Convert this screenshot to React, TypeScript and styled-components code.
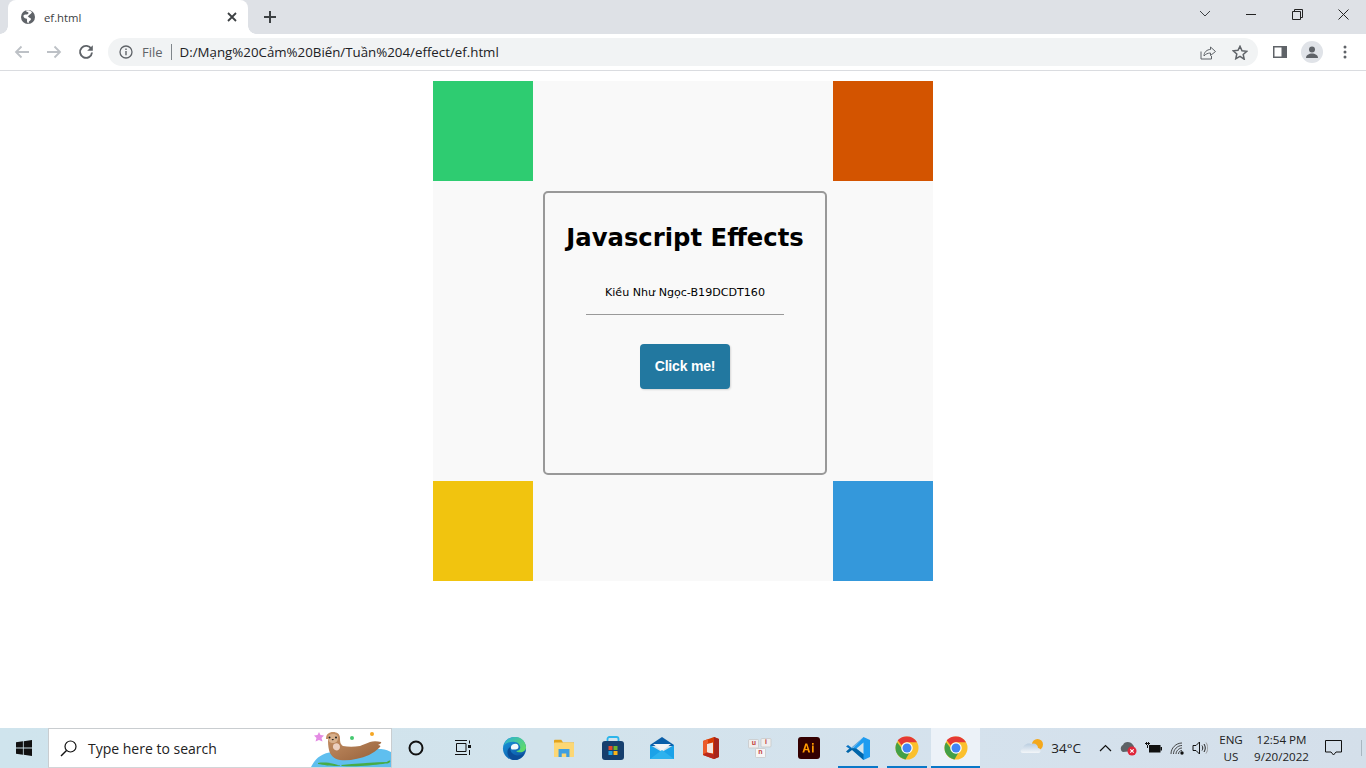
import React from "react";
import styled, { createGlobalStyle } from "styled-components";

const Global = createGlobalStyle`
  html, body { margin: 0; padding: 0; background: #fff; overflow: hidden; }
  * { box-sizing: border-box; }
`;

const Screen = styled.div`
  width: 1366px; height: 768px; display: flex; flex-direction: column; background: #fff;
  font-family: "Open Sans", "Noto Sans", sans-serif;
`;

/* ---------- browser chrome ---------- */
const TabStrip = styled.div`
  height: 34px; background: #dee1e6; display: flex; align-items: stretch; padding-left: 8px; flex: none;
`;
const Tab = styled.div`
  position: relative; width: 240px; background: #fff; border-radius: 8px 8px 0 0;
  display: flex; align-items: center; padding: 0 8px 0 12px; color: #3c4043;
  &::before, &::after { content: ""; position: absolute; bottom: 0; width: 8px; height: 8px; }
  &::before { left: -8px; background: radial-gradient(circle at 0 0, #dee1e6 7.5px, #fff 8px); }
  &::after { right: -8px; background: radial-gradient(circle at 100% 0, #dee1e6 7.5px, #fff 8px); }
`;
const TabTitle = styled.span`
  font-size: 11.3px; margin-left: 8px; flex: 1; color: #3c4043;
`;
const NewTab = styled.div`
  width: 28px; height: 28px; margin-left: 8px; align-self: center; display: flex; align-items: center; justify-content: center;
`;
const StripSpacer = styled.div`flex: 1;`;
const WindowButton = styled.div`
  width: 46px; display: flex; align-items: center; justify-content: center; padding-bottom: 6px;
`;
const Toolbar = styled.div`
  height: 37px; flex: none; background: #fff; border-bottom: 1px solid #dadce0; display: flex; align-items: center;
  padding: 0 0 0 6px;
`;
const NavButton = styled.div`
  width: 32px; height: 28px; display: flex; align-items: center; justify-content: center; flex: none;
`;
const Omnibox = styled.div`
  width: 1150px; height: 28px; margin-left: 6px; border-radius: 14px; background: #f1f3f4; display: flex; align-items: center;
  padding: 0 2px 0 11px; flex: none;
`;
const SiteLabel = styled.span`
  font-size: 13px; color: #5f6368; margin-left: 9px;
`;
const Divider = styled.span`
  width: 1px; height: 16px; background: #80868b; margin: 0 8px 0 8px;
`;
const Url = styled.span`
  font-size: 13.3px; color: #202124; flex: 1; white-space: nowrap;
`;
const OmniAction = styled.div`
  width: 32px; display: flex; align-items: center; justify-content: center;
`;
const ToolRight = styled.div`
  display: flex; align-items: center; margin-left: 6px;
`;
const Avatar = styled.div`
  width: 22px; height: 22px; border-radius: 50%; background: #e0e3e8; margin: 0 20px 0 5px;
  display: flex; align-items: center; justify-content: center; overflow: hidden;
`;

/* ---------- page ---------- */
const Page = styled.main`
  flex: 1; display: flex; justify-content: center; padding-top: 10px; background: #fff;
`;
const Stage = styled.div`
  width: 500px; height: 500px; background: #f9f9f9; display: grid;
  grid-template-columns: 100px 300px 100px; grid-template-rows: 100px 300px 100px;
`;
const Corner = styled.div<{ $color: string }>`
  background: ${(p) => p.$color};
`;
const Blank = styled.div``;
const Card = styled.section`
  width: 284px; height: 284px; margin: 10px; border: 2px solid #999; border-radius: 5px;
  display: flex; flex-direction: column; align-items: center; padding-top: 28px;
`;
const Heading = styled.h1`
  margin: 0; font: bold 24.3px/34px "DejaVu Sans", Verdana, sans-serif; color: #000; white-space: nowrap;
`;
const Author = styled.p`
  margin: 31px 0 0; font: 11.1px/14px "DejaVu Sans", Verdana, sans-serif; color: #000; white-space: nowrap;
`;
const Rule = styled.hr`
  width: 198px; height: 1px; border: 0; background: #999; margin: 14px 0 0;
`;
const ActionButton = styled.button`
  width: 90px; height: 45px; margin-top: 29px; background: #2278a0; color: #fff; border: 0; border-radius: 4px;
  font: bold 14px "Liberation Sans", Arial, sans-serif; letter-spacing: -0.2px; box-shadow: 1px 1px 2px rgba(0,0,0,0.14); padding: 0 0 2px;
`;

/* ---------- taskbar ---------- */
const Taskbar = styled.footer`
  height: 40px; flex: none; display: flex; align-items: stretch;
  background: linear-gradient(90deg, #cfe4ed 0%, #d2e3ec 40%, #d5e2ed 70%, #d4dfea 100%);
`;
const StartButton = styled.div`
  width: 48px; display: flex; align-items: center; justify-content: center; flex: none;
`;
const SearchBox = styled.div`
  position: relative; width: 344px; flex: none; background: #fff; border: 1px solid #c9cdd0; border-bottom-color: #d2d5d8;
  display: flex; align-items: center; padding-left: 11px; overflow: hidden;
`;
const SearchText = styled.span`
  font-size: 14px; color: #222; margin-left: 11px;
`;
const Otter = styled.svg`
  position: absolute; right: 0; top: 0;
`;
const TaskSlot = styled.div<{ $w?: number; $pressed?: boolean; $running?: boolean }>`
  position: relative; width: ${(p) => p.$w ?? 49}px; flex: none; display: flex; align-items: center; justify-content: center;
  background: ${(p) => (p.$pressed ? "#ecf2f8" : "transparent")};
  ${(p) => p.$running && `&::after { content: ""; position: absolute; left: ${p.$pressed ? 0 : 5}px; right: ${p.$pressed ? 0 : 4}px; bottom: 0; height: 2px; background: #0a78c8; }`}
`;
const TrayArea = styled.div`
  flex: 1; display: flex; align-items: center; justify-content: flex-end; color: #1a1a1a;
`;
const Temp = styled.span`
  font-size: 13.5px; margin: 0 12px 0 6px; color: #222;
`;
const TrayIcon = styled.div<{ $w: number }>`
  width: ${(p) => p.$w}px; display: flex; align-items: center; justify-content: center; flex: none;
`;
const TrayText = styled.div<{ $w: number }>`
  width: ${(p) => p.$w}px; font-size: 11.6px; line-height: 17px; text-align: center; color: #222; flex: none; white-space: nowrap;
`;
const Notify = styled.div`
  width: 55px; flex: none; display: flex; align-items: center; justify-content: center; padding-right: 10px; position: relative;
  &::after { content: ""; position: absolute; right: 4px; top: 0; bottom: 0; width: 1px; background: #a9b6c0; }
`;
const KeyLetter = styled.text`
  font: bold 7px "Liberation Sans", Arial, sans-serif; fill: #c23b3b; text-anchor: middle;
`;

/* ---------- icons ---------- */
const Chrome = () => (
  <svg width="24" height="24" viewBox="0 0 48 48">
    <circle cx="24" cy="24" r="23" fill="#fbc02d" />
    <path d="M24 1a23 23 0 0 1 19.9 11.5H24a11.5 11.5 0 0 0-10.4 6.6L5.3 8.6A23 23 0 0 1 24 1z" fill="#e53935" />
    <path d="M4.1 12.5A23 23 0 0 0 21 46.8l9.5-16.4a11.5 11.5 0 0 1-16.5-5.6L4.1 12.5z" fill="#43a047" />
    <circle cx="24" cy="24" r="11.5" fill="#fff" />
    <circle cx="24" cy="24" r="9" fill="#4285f4" />
  </svg>
);

const Edge = () => (
  <svg width="25" height="25" viewBox="0 0 26 26">
    <defs>
      <linearGradient id="edgeA" x1="0" y1="0" x2="1" y2="0.7">
        <stop offset="0" stopColor="#2aaed8" />
        <stop offset="1" stopColor="#5fdc68" />
      </linearGradient>
      <linearGradient id="edgeB" x1="0" y1="0" x2="0.7" y2="1">
        <stop offset="0" stopColor="#1a9be0" />
        <stop offset="1" stopColor="#0c55a4" />
      </linearGradient>
    </defs>
    <circle cx="13" cy="13" r="12" fill="url(#edgeB)" />
    <path d="M9 12C9.500 9 12 8 14 8c2.500 0 3.500 2 3 4-.5 1.500-1.500 2-3 2h-4z" fill="#f2f8fb" />
    <path d="M2 10C4 3 9 1 14 1c6 0 11 5 11 11 0 3-3 5-6 5-2 0-4-.5-4-1.500 2.500 0 4-1.500 4-3.500 0-3-3-6-7-6-4 0-8 1-10 4z" fill="url(#edgeA)" />
    <path d="M9.500 11c-2 3 0 8 5 9 3 .5 6 0 8.500-2-1.500 4-5 7-10 7-1 0-2-.1-2.500-.3C6 22 4.500 17 6.500 13.500 7.200 12.300 8.300 11.500 9.500 11z" fill="#0a4c98" />
  </svg>
);

const Explorer = () => (
  <svg width="22" height="20" viewBox="0 0 24 22">
    <path d="M1 3a1 1 0 0 1 1-1h7l2 3h12v2H1z" fill="#e2a31c" />
    <rect x="1" y="5" width="22" height="16" rx="1" fill="#fcd774" />
    <path d="M6 21v-9h12v9h-3.500v-4h-5v4z" fill="#3f9fe0" />
  </svg>
);

const Store = () => (
  <svg width="24" height="25" viewBox="0 0 24 25">
    <path d="M6.500 6V3a2 2 0 0 1 2-2h7a2 2 0 0 1 2 2v3" fill="none" stroke="#2bb5ea" strokeWidth="1.800" />
    <rect x="1" y="5" width="22" height="19" rx="3" fill="#163f6e" />
    <rect x="7.500" y="10" width="4" height="4" fill="#e5482a" />
    <rect x="12.500" y="10" width="4" height="4" fill="#6fb52b" />
    <rect x="7.500" y="15" width="4" height="4" fill="#1ea3e3" />
    <rect x="12.500" y="15" width="4" height="4" fill="#fbb417" />
  </svg>
);

const Mail = () => (
  <svg width="24" height="24" viewBox="0 0 24 24">
    <path d="M0 9l12-8 12 8v1H0z" fill="#0a5ea8" />
    <path d="M3 8h18l-9 7z" fill="#f3f4f6" />
    <path d="M0 9l12 7 12-7v14H0z" fill="#1ba2e8" />
    <path d="M0 23l12-9 12 9z" fill="#2db2ee" />
  </svg>
);

const Office = () => (
  <svg width="18" height="24" viewBox="0 0 18 24">
    <path d="M1 5l11-4 5 2v18l-5 2-11-4z" fill="#d83b01" />
    <path d="M12 1l5 2v18l-5 2z" fill="#a7251c" />
    <path d="M1 5l5-2v4l-1 1v8.500l-4 1.500z" fill="#eb5a2a" />
    <path d="M5 8l6-1.500v11L5 16.500z" fill="#f3e6e0" />
    <path d="M12 23L1 19l4-2.500 7 2z" fill="#b8281e" />
  </svg>
);

const Unikey = () => (
  <svg width="24" height="22" viewBox="0 0 24 22">
    <g stroke="#c4c4c4" strokeWidth="0.7">
      <rect x="0.500" y="2.500" width="10" height="8.500" rx="1" fill="#efefef" />
      <rect x="13" y="1.500" width="10" height="8.500" rx="1" fill="#efefef" />
      <rect x="7.500" y="11.500" width="10" height="9" rx="1" fill="#f6f6f6" />
    </g>
    <KeyLetter x="6" y="8">u</KeyLetter>
    <KeyLetter x="18" y="7">i</KeyLetter>
    <KeyLetter x="12.500" y="17">n</KeyLetter>
  </svg>
);

const AiLogo = () => (
  <svg width="22" height="22" viewBox="0 0 22 22">
    <rect width="22" height="22" rx="3" fill="#300" />
    <path d="M7.300 6.500h1.900l3 9h-1.900l-.7-2.200H6.900l-.7 2.200H4.400zm1 1.800L7.400 11.900h2z" fill="#ff9a00" />
    <path d="M14 8.600h1.700v6.900H14zM14 6h1.700v1.700H14z" fill="#ff9a00" />
  </svg>
);

const VSCode = () => (
  <svg width="26" height="25" viewBox="0 0 26 25">
    <path d="M18.500 1L25 4v17l-6.500 3L7 13z" fill="#1f9cf0" />
    <path d="M18.500 1L7 12l-4-3-2 1.500L5 13z" fill="#0b74c4" />
    <path d="M1 15.500L3 17l4-3 11.500 10V18l-7-5.500L5 12z" fill="#0065a9" />
    <path d="M18.500 6.500L11.500 12.500l7 5.500z" fill="#d2e3ec" />
  </svg>
);

const Weather = () => (
  <svg width="26" height="20" viewBox="0 0 26 20">
    <defs>
      <linearGradient id="cloud" x1="0" y1="0" x2="0" y2="1">
        <stop offset="0" stopColor="#b9cde0" />
        <stop offset="1" stopColor="#f3f6f9" />
      </linearGradient>
    </defs>
    <circle cx="18.500" cy="6.500" r="5.500" fill="#f4a81c" />
    <path d="M4 15c-3 0-3-3.500-.5-4C4.500 7 8 4.500 12 6c3-1.500 7 0 7 4 3 0 3.500 5 .5 5z" fill="url(#cloud)" />
  </svg>
);

const Otters = () => (
  <Otter width="82" height="38" viewBox="0 0 82 38">
    <defs>
      <linearGradient id="otterBody" x1="0" y1="0" x2="1" y2="1">
        <stop offset="0" stopColor="#c89468" />
        <stop offset="1" stopColor="#96603a" />
      </linearGradient>
    </defs>
    <path d="M2 38C6 30 12 24 24 23c14-2 36-4 48-3 5 .5 8 2 10 3v15z" fill="#5fbfef" />
    <path d="M9 34c6-1 14 0 20 2 4 0 2 1-1 1-6 0-14-1-19-2zM32 36c14-1 30-3 46-3 2-2 4-2 3 0-1 2-4 1-7 2-10 1-24 3-41 2z" fill="#47ab46" />
    <path d="M10 3l1.500 3 3.500 .5-2.500 2.500 1 3.500L10 11l-3.500 1.500 1-3.500L5 6.500 8.500 6z" fill="#e48be4" />
    <circle cx="43" cy="9" r="2" fill="#45c870" />
    <circle cx="63" cy="5" r="2" fill="#f5a623" />
    <path d="M17 10C17 5 20 3 24 3s7 2 7 6c0 3 0 6 3 8 5 1 11 1 17 0 3-1 7-3 10-4 3-1 7-1 11 0 1 1-1 2-3 3 2 0 3 1 2 2-3 3-7 6-11 8-9 4-20 6-29 5-6-1-10-5-11-10-1-4-1-8-1-11z" fill="url(#otterBody)" />
    <path d="M19 9c0-3 2-4 5-4s5 1 5 4c0 3-2 5-5 5s-5-2-5-5z" fill="#d8b08c" />
    <circle cx="20.500" cy="8.500" r="1" fill="#222" />
    <circle cx="27" cy="8.500" r="1" fill="#222" />
    <path d="M22.500 10h2.500l-1.200 1.500z" fill="#222" />
    <path d="M25 15c3-2 6 0 6 3s-3 4-5 3-3-4-1-6z" fill="#ecd0c0" />
  </Otter>
);

export default function App() {
  return (
    <Screen>
      <Global />
      <TabStrip>
        <Tab>
          <svg width="16" height="16" viewBox="0 0 16 16">
            <circle cx="8" cy="8" r="7" fill="#5f6368" />
            <path d="M5.500 1.800C6.500 3 8.500 3 8.500 4S7 5.500 6 5.500 4 5.500 3.500 6.500 4.500 9.500 6 9.500 7 11 7 12 7.500 13.500 8 14.500c1 0 .5-1.500 1-2s2-1.500 2-2.500-1.500-1-2-1.500S7.500 7 7.500 7.500 10 5 10.500 5 11.500 3.500 12 3.200C9.500.5 6.500 1 5.500 1.800z" fill="#fff" />
          </svg>
          <TabTitle>ef.html</TabTitle>
          <svg width="16" height="16" viewBox="0 0 16 16">
            <path d="M4 4l8 8M12 4l-8 8" stroke="#3c4043" strokeWidth="1.800" />
          </svg>
        </Tab>
        <NewTab>
          <svg width="14" height="14" viewBox="0 0 14 14">
            <path d="M7 1v12M1 7h12" stroke="#3c4043" strokeWidth="2" />
          </svg>
        </NewTab>
        <StripSpacer />
        <WindowButton>
          <svg width="12" height="8" viewBox="0 0 12 8">
            <path d="M1 1l5 5 5-5" fill="none" stroke="#3c4043" strokeWidth="1" />
          </svg>
        </WindowButton>
        <WindowButton>
          <svg width="11" height="3" viewBox="0 0 11 3">
            <path d="M0 1.500h10" stroke="#222" strokeWidth="1" />
          </svg>
        </WindowButton>
        <WindowButton>
          <svg width="11" height="11" viewBox="0 0 11 11">
            <path d="M.500 2.500h8v8h-8zM2.500 2.500v-2h8v8h-2" fill="none" stroke="#222" strokeWidth="1" />
          </svg>
        </WindowButton>
        <WindowButton>
          <svg width="11" height="11" viewBox="0 0 11 11">
            <path d="M.500.500l10 10M10.500.500l-10 10" stroke="#222" strokeWidth="1" />
          </svg>
        </WindowButton>
      </TabStrip>
      <Toolbar>
        <NavButton>
          <svg width="16" height="14" viewBox="0 0 16 14">
            <path d="M15 7H2M7.500 1.500L2 7l5.500 5.500" fill="none" stroke="#bdc1c6" strokeWidth="1.800" />
          </svg>
        </NavButton>
        <NavButton>
          <svg width="16" height="14" viewBox="0 0 16 14">
            <path d="M1 7h13M8.500 1.500L14 7l-5.500 5.500" fill="none" stroke="#bdc1c6" strokeWidth="1.800" />
          </svg>
        </NavButton>
        <NavButton>
          <svg width="16" height="16" viewBox="0 0 16 16">
            <path d="M13.300 5A6 6 0 1 0 14 8.500" fill="none" stroke="#5f6368" strokeWidth="1.900" />
            <path d="M14.800 1.200v5.600H9.200z" fill="#5f6368" />
          </svg>
        </NavButton>
        <Omnibox>
          <svg width="14" height="14" viewBox="0 0 14 14">
            <circle cx="7" cy="7" r="6" fill="none" stroke="#5f6368" strokeWidth="1.300" />
            <path d="M7 6v4.200M7 3.500v1.500" stroke="#5f6368" strokeWidth="1.400" />
          </svg>
          <SiteLabel>File</SiteLabel>
          <Divider />
          <Url>D:/Mạng%20Cảm%20Biến/Tuần%204/effect/ef.html</Url>
          <OmniAction>
            <svg width="16" height="15" viewBox="0 0 16 15">
              <path d="M1 6.500v7.500h10.500v-3" fill="none" stroke="#5f6368" strokeWidth="1" />
              <path d="M4 11c0-4 3-6.500 6.500-6.500V2L15.500 6.500 10.500 10.500V8C8 8 5.500 9 4 11z" fill="none" stroke="#5f6368" strokeWidth="1" />
            </svg>
          </OmniAction>
          <OmniAction>
            <svg width="16" height="15" viewBox="0 0 16 15">
              <path d="M8 1.300l2 4.500 4.800.500-3.600 3.200 1 4.700L8 11.300l-4.200 2.400 1-4.700L1.200 5.800 6 5.300z" fill="none" stroke="#5f6368" strokeWidth="1.500" />
            </svg>
          </OmniAction>
        </Omnibox>
        <ToolRight>
          <NavButton>
            <svg width="14" height="12" viewBox="0 0 14 12">
              <rect width="14" height="12" fill="#5f6368" />
              <rect x="1.500" y="1.500" width="7" height="9" fill="#fff" />
            </svg>
          </NavButton>
          <Avatar>
            <svg width="14" height="14" viewBox="0 0 14 14">
              <circle cx="7" cy="4.500" r="3" fill="#5f6368" />
              <path d="M1 13c0-3 3-4.500 6-4.500s6 1.500 6 4.500z" fill="#5f6368" />
            </svg>
          </Avatar>
          <svg width="4" height="14" viewBox="0 0 4 14">
            <circle cx="2" cy="2" r="1.500" fill="#5f6368" />
            <circle cx="2" cy="7" r="1.500" fill="#5f6368" />
            <circle cx="2" cy="12" r="1.500" fill="#5f6368" />
          </svg>
        </ToolRight>
      </Toolbar>

      <Page>
        <Stage>
          <Corner $color="#2ecc71" />
          <Blank />
          <Corner $color="#d35400" />
          <Blank />
          <Card>
            <Heading>Javascript Effects</Heading>
            <Author>Kiều Như Ngọc-B19DCDT160</Author>
            <Rule />
            <ActionButton>Click me!</ActionButton>
          </Card>
          <Blank />
          <Corner $color="#f1c40f" />
          <Blank />
          <Corner $color="#3498db" />
        </Stage>
      </Page>

      <Taskbar>
        <StartButton>
          <svg width="16" height="16" viewBox="0 0 16 16">
            <path d="M0 2.300L6.900 1.300v6.300H0zM7.700 1.200L16 0v7.600H7.700zM0 8.400h6.900v6.300L0 13.700zM7.700 8.400H16V16l-8.300-1.200z" fill="#111" />
          </svg>
        </StartButton>
        <SearchBox>
          <svg width="17" height="17" viewBox="0 0 17 17">
            <circle cx="10.500" cy="6.500" r="5.500" fill="none" stroke="#111" strokeWidth="1.200" />
            <path d="M6.500 10.500L1 16" stroke="#111" strokeWidth="1.400" />
          </svg>
          <SearchText>Type here to search</SearchText>
          <Otters />
        </SearchBox>
        <TaskSlot $w={48}>
          <svg width="16" height="16" viewBox="0 0 16 16">
            <circle cx="8" cy="8" r="6.500" fill="none" stroke="#111" strokeWidth="2" />
          </svg>
        </TaskSlot>
        <TaskSlot $w={50}>
          <svg width="18" height="16" viewBox="0 0 18 16" style={{ marginRight: 4 }}>
            <path d="M1 .500h12M2.500 3.500h9.500v8H2.500zM1 14.500h12M15.500 .500v3M15.500 10v5" fill="none" stroke="#111" strokeWidth="1" />
            <rect x="14" y="5" width="3" height="3" fill="#111" />
          </svg>
        </TaskSlot>
        <TaskSlot><Edge /></TaskSlot>
        <TaskSlot><Explorer /></TaskSlot>
        <TaskSlot><Store /></TaskSlot>
        <TaskSlot><Mail /></TaskSlot>
        <TaskSlot><Office /></TaskSlot>
        <TaskSlot><Unikey /></TaskSlot>
        <TaskSlot><AiLogo /></TaskSlot>
        <TaskSlot $running><VSCode /></TaskSlot>
        <TaskSlot $running><Chrome /></TaskSlot>
        <TaskSlot $running $pressed><Chrome /></TaskSlot>
        <TrayArea>
          <Weather />
          <Temp>34°C</Temp>
          <TrayIcon $w={24}>
            <svg width="13" height="8" viewBox="0 0 13 8">
              <path d="M1 7l5.500-5.500L12 7" fill="none" stroke="#111" strokeWidth="1.200" />
            </svg>
          </TrayIcon>
          <TrayIcon $w={24}>
            <svg width="18" height="16" viewBox="0 0 18 16">
              <path d="M3 12C0 11 0 6 3 5c1-4 8-4 10 0 2 2 1 5 0 6z" fill="#5d6266" />
              <circle cx="12" cy="11" r="4.500" fill="#e0263a" />
              <path d="M10.300 9.300l3.400 3.400M13.700 9.300l-3.400 3.400" stroke="#fff" strokeWidth="1.100" />
            </svg>
          </TrayIcon>
          <TrayIcon $w={24}>
            <svg width="17" height="12" viewBox="0 0 17 12">
              <path d="M0 1.500h5M1.500 0v3M3.500 0v3M2.500 3v3" stroke="#111" strokeWidth="1" fill="none" />
              <rect x="4" y="3" width="11.500" height="7.500" fill="#111" />
              <rect x="15.500" y="5" width="1.500" height="3.500" fill="#111" />
            </svg>
          </TrayIcon>
          <TrayIcon $w={25}>
            <svg width="15" height="13" viewBox="0 0 15 13">
              <path d="M1 12C1 6 6 1 12 1M3.500 12c0-4.500 4-8.500 8.500-8.500M6 12c0-3 3-6 6-6M8.500 12c0-2 1.500-3.500 3.500-3.500" fill="none" stroke="#333" strokeWidth="0.900" />
              <circle cx="12" cy="11" r="1.700" fill="#111" />
            </svg>
          </TrayIcon>
          <TrayIcon $w={20}>
            <svg width="16" height="14" viewBox="0 0 16 14">
              <path d="M1 4.500h3L7.500 1v12L4 9.500H1z" fill="none" stroke="#111" strokeWidth="1" />
              <path d="M10 4.500c1 1.500 1 3.500 0 5M12 3c1.700 2.500 1.700 5.500 0 8" fill="none" stroke="#222" strokeWidth="1" />
              <path d="M14 1.500c2.300 3.500 2.300 7.500 0 11" fill="none" stroke="#999" strokeWidth="1" />
            </svg>
          </TrayIcon>
          <TrayText $w={42}>ENG<br />US</TrayText>
          <TrayText $w={59}>12:54 PM<br />9/20/2022</TrayText>
          <Notify>
            <svg width="17" height="16" viewBox="0 0 17 16">
              <path d="M.500.500h16v11.500h-5.500l-2.500 3-2.500-3H.500z" fill="none" stroke="#111" strokeWidth="1" />
            </svg>
          </Notify>
        </TrayArea>
      </Taskbar>
    </Screen>
  );
}
